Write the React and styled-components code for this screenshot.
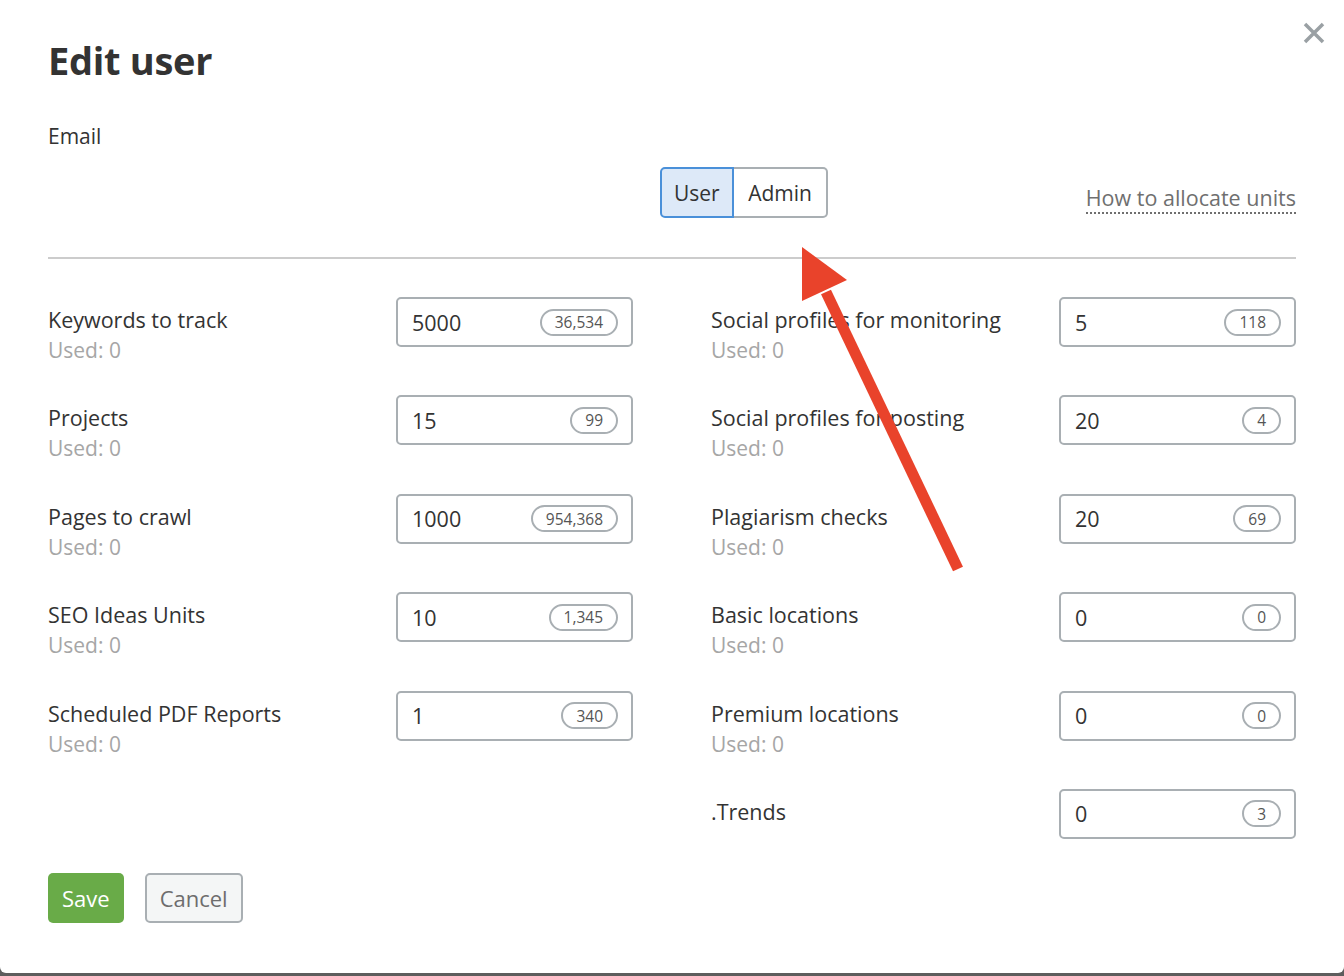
import React from "react";
import styled, { createGlobalStyle } from "styled-components";

const Global = createGlobalStyle`
  html, body { margin: 0; padding: 0; background: #5d5d5d; }
  body { font-family: "Open Sans", "Noto Sans", sans-serif; color: #333; }
  * { box-sizing: border-box; }
`;

const Modal = styled.div`
  position: relative;
  width: 1344px;
  height: 973px;
  background: #fff;
  border-radius: 0 0 6px 6px;
  padding: 30px 48px 0 48px;
`;

const Close = styled.button`
  position: absolute;
  top: 20px;
  right: 17px;
  width: 26px;
  height: 26px;
  padding: 0;
  border: none;
  background: transparent;
  cursor: pointer;
`;

const Title = styled.h1`
  margin: 0;
  font-size: 38px;
  line-height: 60px;
  font-weight: 700;
  color: #333;
  letter-spacing: -0.3px;
`;

const FieldLabel = styled.div`
  margin-top: 30px;
  font-size: 21px;
  line-height: 32px;
  color: #333;
`;

const RoleRow = styled.div`
  position: relative;
  display: flex;
  align-items: flex-end;
  justify-content: flex-end;
  height: 52px;
  margin-top: 15px;
`;

const Toggle = styled.div`
  position: absolute;
  left: 612px;
  top: 0;
  display: flex;
`;

const ToggleBtn = styled.button`
  height: 51px;
  padding: 0 ${(p) => (p.$first ? "12px" : "14.5px")};
  font-family: inherit;
  font-size: 21px;
  color: #333;
  background: ${(p) => (p.$active ? "#dde9f8" : "#fff")};
  border: 2px solid ${(p) => (p.$active ? "#4a90d9" : "#a9afb3")};
  border-radius: ${(p) => (p.$first ? "5px 0 0 5px" : "0 5px 5px 0")};
  ${(p) => (p.$first ? "" : "border-left: none;")}
  cursor: pointer;
`;

const HowLink = styled.a`
  font-size: 21.5px;
  line-height: 28px;
  color: #6f6f6f;
  text-decoration: none;
  border-bottom: 2px dotted #6f6f6f;
  margin-bottom: 5px;
`;

const Separator = styled.hr`
  margin: 38px 0 38px 0;
  border: none;
  border-top: 2px solid #cccccc;
`;

const Columns = styled.div`
  display: grid;
  grid-template-columns: 585px 585px;
  column-gap: 78px;
`;

const Column = styled.div`
  display: flex;
  flex-direction: column;
  gap: 49.4px;
`;

const Row = styled.div`
  display: flex;
  align-items: flex-start;
  height: 49px;
`;

const LabelBlock = styled.div`
  flex: 1;
  padding-top: 8px;
`;

const Label = styled.div`
  font-size: 21.5px;
  line-height: 30px;
  color: #333;
  white-space: nowrap;
`;

const Used = styled.div`
  font-size: 21px;
  line-height: 30px;
  color: #a6a6a6;
`;

const InputBox = styled.div`
  width: 237px;
  height: 50px;
  flex-shrink: 0;
  display: flex;
  align-items: center;
  justify-content: space-between;
  padding: 0 13px 0 14px;
  border: 2px solid #a9afb3;
  border-radius: 5px;
`;

const Value = styled.span`
  font-size: 21.5px;
  color: #333;
`;

const Badge = styled.span`
  height: 27px;
  min-width: 37px;
  padding: 0 13px;
  display: inline-flex;
  align-items: center;
  justify-content: center;
  border: 2px solid #a9afb3;
  border-radius: 14px;
  font-size: 15.5px;
  color: #555;
`;

const Buttons = styled.div`
  display: flex;
  gap: 21px;
  margin-top: 35px;
`;

const Button = styled.button`
  height: 50px;
  padding: 0 ${(p) => (p.$primary ? "14px" : "13px")};
  font-family: inherit;
  font-size: 22px;
  border-radius: 5px;
  cursor: pointer;
  color: ${(p) => (p.$primary ? "#fff" : "#6d6d6d")};
  background: ${(p) => (p.$primary ? "#69ab48" : "#f4f6f6")};
  border: ${(p) => (p.$primary ? "none" : "2px solid #a9afb3")};
`;

const Arrow = styled.svg`
  position: absolute;
  left: 0;
  top: 0;
  pointer-events: none;
`;

const left = [
  ["Keywords to track", "5000", "36,534"],
  ["Projects", "15", "99"],
  ["Pages to crawl", "1000", "954,368"],
  ["SEO Ideas Units", "10", "1,345"],
  ["Scheduled PDF Reports", "1", "340"],
];

const right = [
  ["Social profiles for monitoring", "5", "118"],
  ["Social profiles for posting", "20", "4"],
  ["Plagiarism checks", "20", "69"],
  ["Basic locations", "0", "0"],
  ["Premium locations", "0", "0"],
  [".Trends", "0", "3", true],
];

function Field({ label, value, badge, noUsed }) {
  return (
    <Row>
      <LabelBlock>
        <Label>{label}</Label>
        {!noUsed && <Used>Used: 0</Used>}
      </LabelBlock>
      <InputBox>
        <Value>{value}</Value>
        <Badge>{badge}</Badge>
      </InputBox>
    </Row>
  );
}

export default function App() {
  return (
    <>
      <Global />
      <Modal>
        <Close aria-label="Close">
          <svg width="26" height="26" viewBox="0 0 26 26">
            <path d="M4 4 L22 22 M22 4 L4 22" stroke="#9aa0a4" strokeWidth="3.5" strokeLinecap="butt" />
          </svg>
        </Close>
        <Title>Edit user</Title>
        <FieldLabel>Email</FieldLabel>
        <RoleRow>
          <Toggle>
            <ToggleBtn $active $first>User</ToggleBtn>
            <ToggleBtn>Admin</ToggleBtn>
          </Toggle>
          <HowLink href="#">How to allocate units</HowLink>
        </RoleRow>
        <Separator />
        <Columns>
          <Column>
            {left.map(([l, v, b]) => (
              <Field key={l} label={l} value={v} badge={b} />
            ))}
          </Column>
          <Column>
            {right.map(([l, v, b, n]) => (
              <Field key={l} label={l} value={v} badge={b} noUsed={n} />
            ))}
          </Column>
        </Columns>
        <Buttons>
          <Button $primary>Save</Button>
          <Button>Cancel</Button>
        </Buttons>
        <Arrow width="1344" height="973" viewBox="0 0 1344 973">
          <line x1="958" y1="569" x2="826" y2="292" stroke="#e9432b" strokeWidth="11" />
          <polygon points="802,247 802,301 847,280" fill="#e9432b" />
        </Arrow>
      </Modal>
    </>
  );
}
